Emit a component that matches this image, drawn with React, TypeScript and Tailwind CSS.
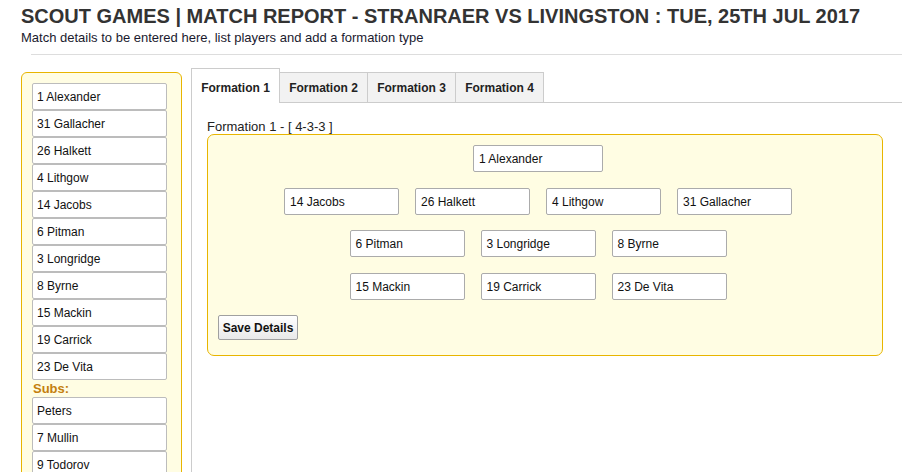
import React from "react";

const starters = [
  "1 Alexander",
  "31 Gallacher",
  "26 Halkett",
  "4 Lithgow",
  "14 Jacobs",
  "6 Pitman",
  "3 Longridge",
  "8 Byrne",
  "15 Mackin",
  "19 Carrick",
  "23 De Vita",
];
const subs = ["Peters", "7 Mullin", "9 Todorov"];

function ListItem({ name }: { name: string }) {
  return (
    <div className="flex h-[27px] w-[135px] items-center rounded-[2px] border border-[#bcbcbc] bg-white pl-[4px] pt-[1px] text-[12px] text-[#111]">
      {name}
    </div>
  );
}

function Slot({ name, wide }: { name: string; wide?: boolean }) {
  return (
    <div
      className={`flex h-[27px] items-center rounded-[2px] border border-[#ababab] bg-white pl-[5px] text-[12px] text-[#111] ${
        wide ? "w-[130px]" : "w-[115px]"
      }`}
    >
      {name}
    </div>
  );
}

export default function App() {
  return (
    <div
      className="h-[472px] w-[902px] overflow-hidden bg-white text-[#111]"
      style={{ fontFamily: '"Liberation Sans", Arial, sans-serif' }}
    >
      <div className="pl-[21px] pt-[4px]">
        <h1 className="whitespace-nowrap text-[20px] font-bold leading-[24px] text-[#333]">
          SCOUT GAMES | MATCH REPORT - STRANRAER VS LIVINGSTON : TUE, 25TH JUL 2017
        </h1>
        <p className="mt-[2px] text-[13px] leading-[16px] text-[#1a1a2e]">
          Match details to be entered here, list players and add a formation type
        </p>
      </div>
      <div className="ml-[31px] mt-[8px] h-px bg-[#dddddd]" />

      <div className="mt-[13px] flex items-start pl-[21px]">
        {/* left panel */}
        <div className="mt-[4px] h-[420px] w-[161px] shrink-0 rounded-[6px] border border-[#e8b500] bg-[#fffde3] pl-[10px] pt-[10px]">
          {starters.map((n) => (
            <ListItem key={n} name={n} />
          ))}
          <div className="pl-[1px] text-[13px] font-bold leading-[17px] text-[#c47f0e]">
            Subs:
          </div>
          {subs.map((n) => (
            <ListItem key={n} name={n} />
          ))}
        </div>

        {/* tabs */}
        <div className="ml-[9px] h-[420px] flex-1 border-l border-[#cccccc]">
          <div className="flex items-end">
            <div className="flex h-[35px] w-[88px] items-end justify-center border-r border-t border-[#cccccc] bg-white pb-[8px] text-[12px] font-bold leading-[14px] text-[#222]">
              Formation 1
            </div>
            {["Formation 2", "Formation 3", "Formation 4"].map((t) => (
              <div
                key={t}
                className="flex h-[31px] w-[88px] items-end justify-center border-b border-r border-t border-[#cccccc] bg-[#f2f2f2] pb-[7px] text-[12px] font-bold leading-[14px] text-[#222]"
              >
                {t}
              </div>
            ))}
            <div className="h-px flex-1 bg-[#cccccc]" />
          </div>

          <div className="pl-[15px] pt-[17px]">
            <div className="text-[13px] leading-[14px] text-[#222]">
              Formation 1 - [ 4-3-3 ]
            </div>
            <div className="w-[676px] rounded-[7px] border border-[#e8b500] bg-[#fffde3] pb-[15px] pl-[10px] pr-[24px] pt-[10px]">
              <div className="flex justify-center gap-[16px]">
                <Slot name="1 Alexander" wide />
              </div>
              <div className="mt-[16px] flex justify-center gap-[16px]">
                <Slot name="14 Jacobs" />
                <Slot name="26 Halkett" />
                <Slot name="4 Lithgow" />
                <Slot name="31 Gallacher" />
              </div>
              <div className="mt-[15px] flex justify-center gap-[16px]">
                <Slot name="6 Pitman" />
                <Slot name="3 Longridge" />
                <Slot name="8 Byrne" />
              </div>
              <div className="mt-[16px] flex justify-center gap-[16px]">
                <Slot name="15 Mackin" />
                <Slot name="19 Carrick" />
                <Slot name="23 De Vita" />
              </div>
              <div className="mt-[15px] flex">
                <button className="flex h-[25px] w-[80px] items-center justify-center rounded-[2px] border border-[#a0a0a0] bg-gradient-to-b from-white to-[#e9e9e9] text-[12px] font-bold text-[#111]">
                  Save Details
                </button>
              </div>
            </div>
          </div>
        </div>
      </div>
    </div>
  );
}
